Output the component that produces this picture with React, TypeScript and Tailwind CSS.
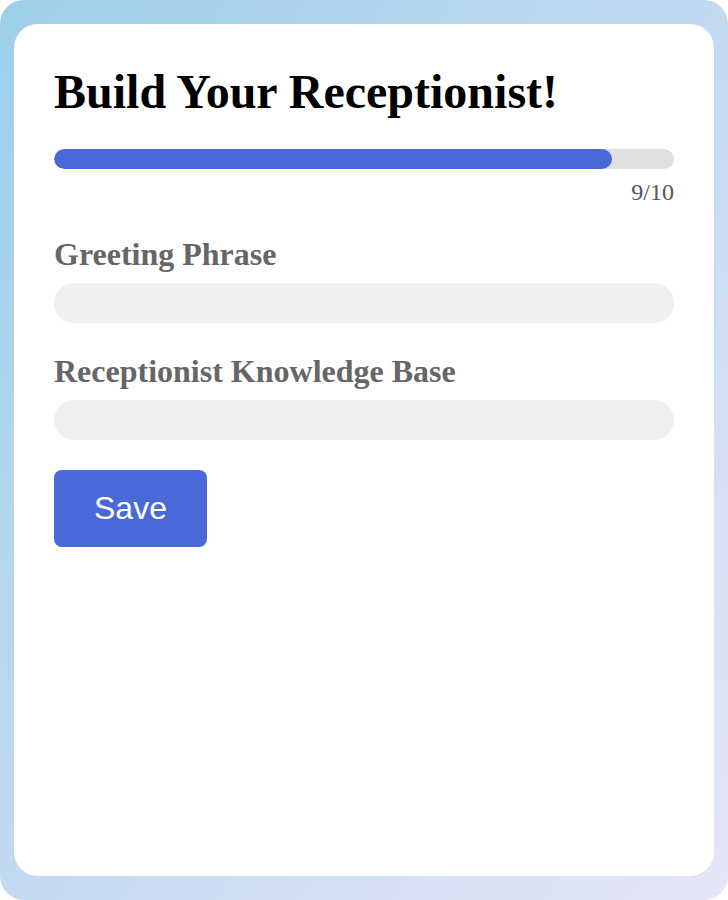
import React, { useState } from "react";

const serif = { fontFamily: '"Liberation Serif", "Times New Roman", serif' };

export default function App() {
    const [greeting, setGreeting] = useState("");
    const [knowledge, setKnowledge] = useState("");
    const step = 9;
    const total = 10;

    return (
        <div className="w-[728px] h-[900px] rounded-3xl bg-gradient-to-br from-[#9dcfea] to-[#e6e5f8] px-[14px] py-6">
            <div className="h-full bg-white rounded-3xl p-10" style={serif}>
                <h1 className="text-[48px] font-bold text-black leading-[1.15]">Build Your Receptionist!</h1>

                <div className="mt-[30px] h-5 w-full rounded-full bg-[#e0e0e0] overflow-hidden">
                    <div
                        className="h-full rounded-full bg-[#4a69d9]"
                        style={{ width: `${(step / total) * 100}%` }}
                    />
                </div>
                <div className="mt-[10px] text-right text-[24px] text-[#555555] leading-[1.15]">
                    {step}/{total}
                </div>

                <label className="block mt-[29px] text-[32px] font-bold text-[#666666] leading-[1.15]">
                    Greeting Phrase
                </label>
                <input
                    value={greeting}
                    onChange={(e) => setGreeting(e.target.value)}
                    className="block mt-[10px] h-10 w-full rounded-full bg-[#f0f0f0] px-5 outline-none"
                />

                <label className="block mt-[30px] text-[32px] font-bold text-[#666666] leading-[1.15]">
                    Receptionist Knowledge Base
                </label>
                <input
                    value={knowledge}
                    onChange={(e) => setKnowledge(e.target.value)}
                    className="block mt-[11px] h-10 w-full rounded-full bg-[#f0f0f0] px-5 outline-none"
                />

                <button
                    className="mt-[30px] rounded-lg bg-[#4a69d9] px-10 py-5 text-[32px] leading-[1.15] text-white"
                    style={{ fontFamily: '"Liberation Sans", Arial, sans-serif' }}
                >
                    Save
                </button>
            </div>
        </div>
    );
}
